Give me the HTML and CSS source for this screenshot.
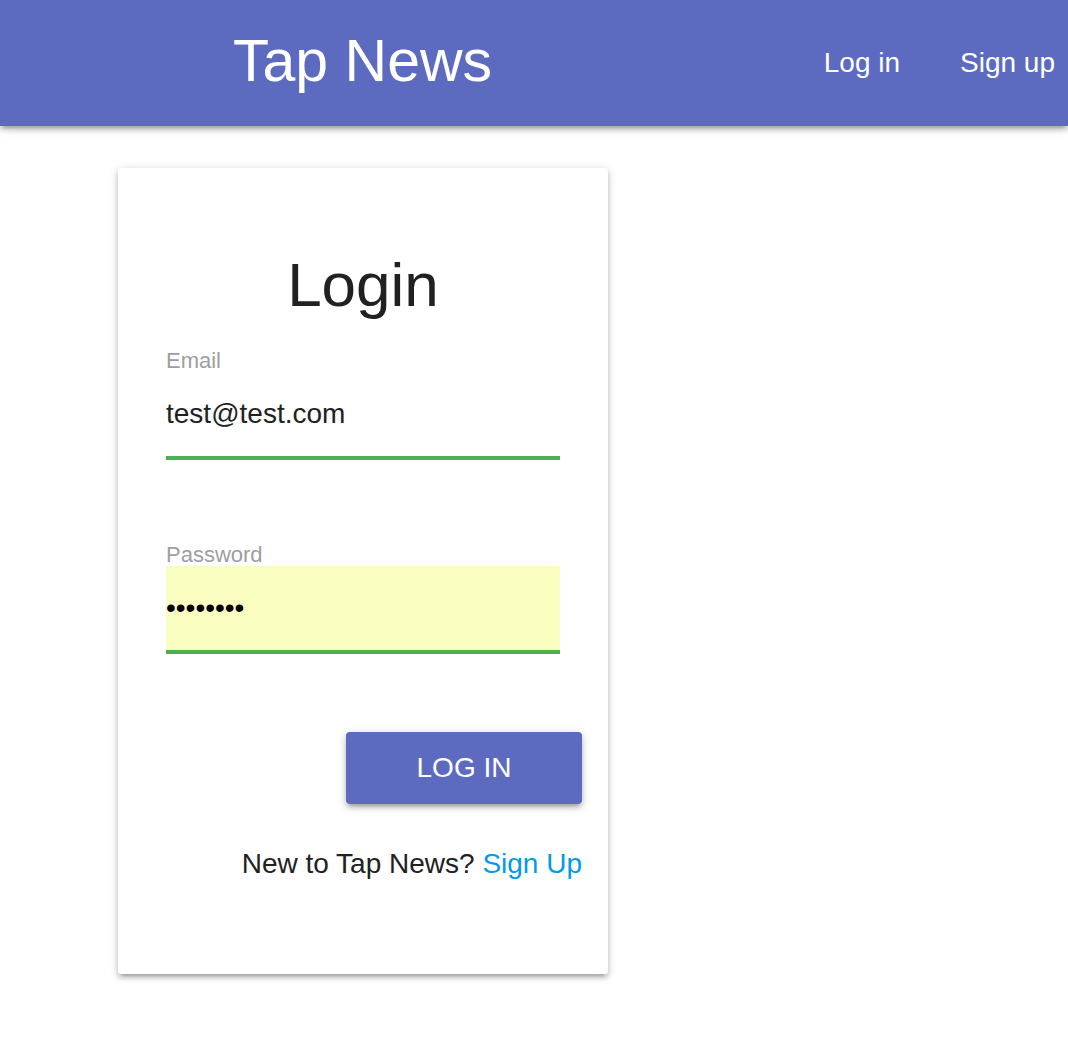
FILE: index.html
```html
<!DOCTYPE html>
<html lang="en">
<head>
<meta charset="utf-8">
<title>Tap News</title>
<link rel="stylesheet" href="styles.css">
</head>
<body>
<header class="topbar">
  <a class="brand" href="#">Tap News</a>
  <ul class="nav-links">
    <li><a href="#">Log in</a></li>
    <li><a href="#">Sign up</a></li>
  </ul>
</header>
<main class="page">
  <form class="card">
    <h3 class="card-title">Login</h3>
    <div class="fields">
      <div class="field">
        <label class="field-label" for="email">Email</label>
        <input class="field-input" id="email" type="email" value="test@test.com">
      </div>
      <div class="field">
        <label class="field-label" for="password">Password</label>
        <input class="field-input autofilled" id="password" type="password" value="12345678">
      </div>
    </div>
    <div class="actions">
      <button class="btn" type="button">LOG IN</button>
    </div>
    <p class="signup-note">New to Tap News? <a href="#">Sign Up</a></p>
  </form>
</main>
</body>
</html>
```
FILE: styles.css
```css
* { box-sizing: border-box; }

html, body {
  margin: 0;
  padding: 0;
  background: #ffffff;
  font-family: "Liberation Sans", Arial, Helvetica, sans-serif;
  color: #212121;
}

.topbar {
  height: 126px;
  background: #5c6bc0;
  display: flex;
  align-items: center;
  padding: 0 13px 0 233px;
  box-shadow: 0 4px 4px 0 rgba(0,0,0,0.14), 0 6px 2px -4px rgba(0,0,0,0.12), 0 2px 10px 0 rgba(0,0,0,0.2);
  position: relative;
  z-index: 1;
}

.brand {
  color: #ffffff;
  text-decoration: none;
  font-size: 59px;
  line-height: 123px;
  height: 126px;
}

.nav-links {
  list-style: none;
  margin: 0 0 0 auto;
  padding: 0;
  display: flex;
  gap: 60px;
}

.nav-links a {
  color: #ffffff;
  text-decoration: none;
  font-size: 28px;
  line-height: 126px;
  display: block;
}

.page {
  padding: 42px 0 40px 118px;
}

.card {
  width: 490px;
  height: 806px;
  background: #ffffff;
  border-radius: 3px;
  padding: 83px 26px 0 48px;
  box-shadow: 0 4px 4px 0 rgba(0,0,0,0.14), 0 6px 2px -4px rgba(0,0,0,0.12), 0 2px 10px 0 rgba(0,0,0,0.2);
  display: flex;
  flex-direction: column;
}

.card-title {
  margin: 0 22px 0 0;
  font-size: 62px;
  font-weight: 400;
  line-height: 68px;
  height: 68px;
  text-align: center;
  color: #212121;
}

.fields {
  padding-right: 22px;
  margin-top: 31px;
  display: flex;
  flex-direction: column;
  gap: 84px;
}

.field {
  display: flex;
  flex-direction: column;
}

.field-label {
  font-size: 22px;
  line-height: 22px;
  color: #9e9e9e;
}

.field-input {
  display: block;
  width: 100%;
  height: 88px;
  margin: 0;
  padding: 0;
  border: none;
  border-bottom: 4px solid #4caf50;
  border-radius: 0;
  background: transparent;
  outline: none;
  font-family: "Liberation Sans", Arial, Helvetica, sans-serif;
  font-size: 28px;
  line-height: 84px;
  color: #212121;
}

.field-input.autofilled {
  background: #fafdc0;
  color: #000000;
}

.actions {
  display: flex;
  justify-content: flex-end;
  margin-top: 78px;
}

.btn {
  width: 236px;
  height: 72px;
  border: none;
  border-radius: 4px;
  background: #5c6bc0;
  color: #ffffff;
  font-family: "Liberation Sans", Arial, Helvetica, sans-serif;
  font-size: 28px;
  line-height: 72px;
  padding: 0;
  box-shadow: 0 4px 4px 0 rgba(0,0,0,0.14), 0 6px 2px -4px rgba(0,0,0,0.12), 0 2px 10px 0 rgba(0,0,0,0.2);
  cursor: pointer;
}

.signup-note {
  margin: 42px 0 0 0;
  font-size: 28px;
  line-height: 36px;
  text-align: right;
  color: #212121;
}

.signup-note a {
  color: #039be5;
  text-decoration: none;
}
```
